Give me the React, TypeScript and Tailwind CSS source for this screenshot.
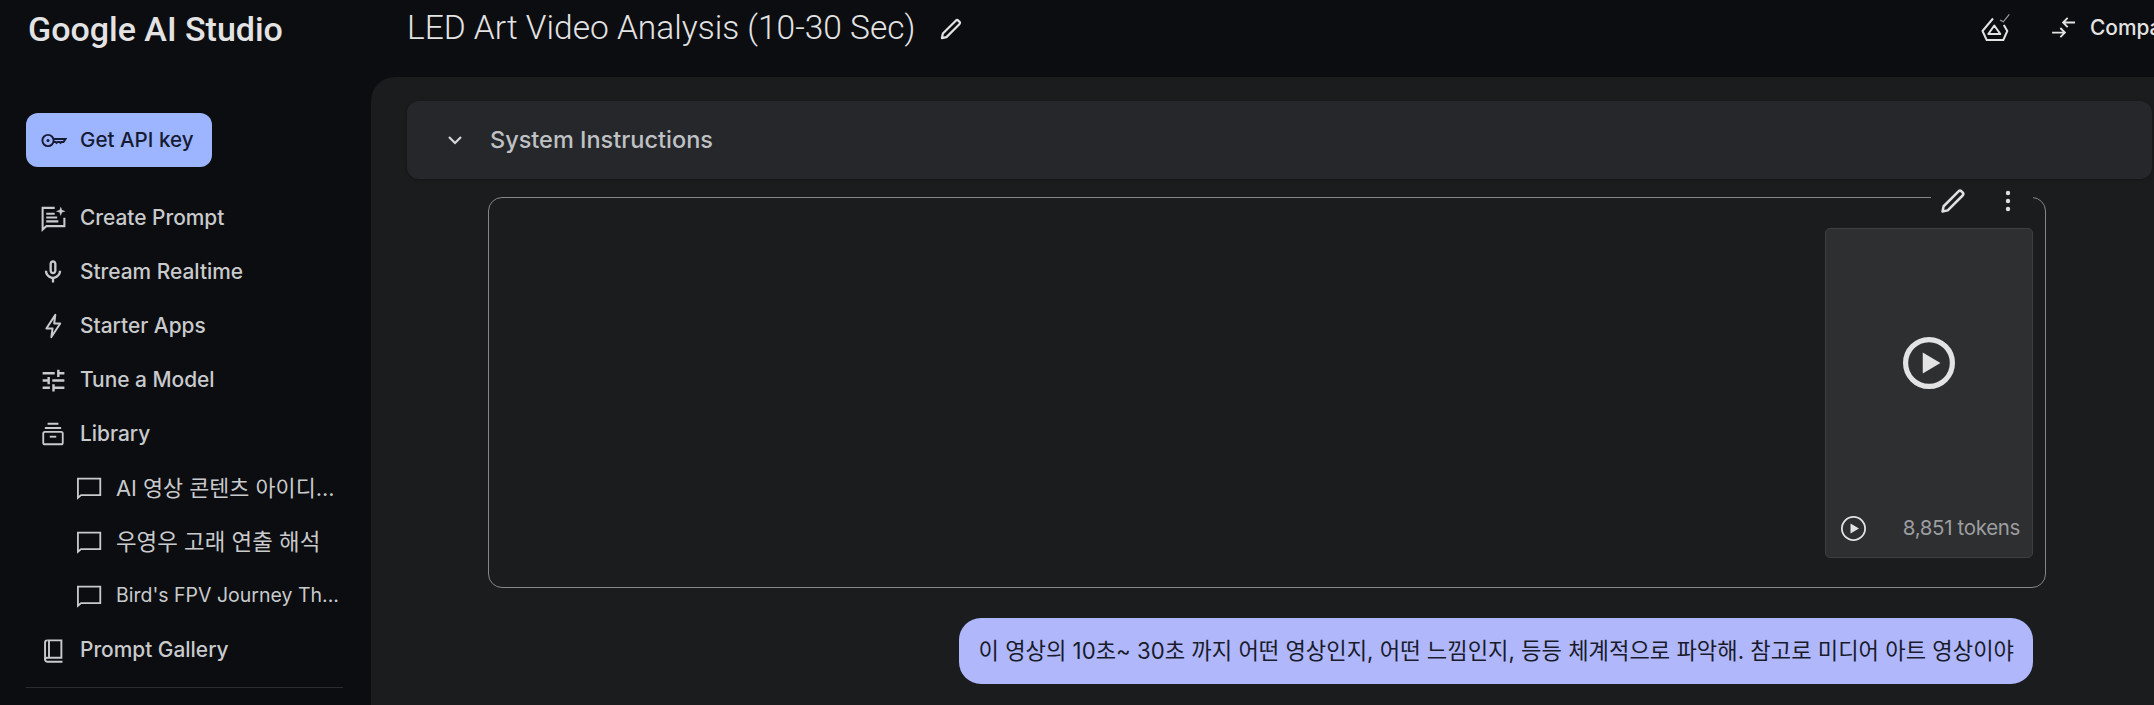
import type { ReactNode } from 'react'

const Icon = ({ size = 26, children, className = '' }: { size?: number; children: ReactNode; className?: string }) => (
  <svg width={size} height={size} viewBox="0 0 24 24" fill="none" className={`shrink-0 ${className}`}>
    {children}
  </svg>
)

const line = { stroke: 'currentColor', strokeWidth: 1.7, fill: 'none' }

const CreateIcon = () => (
  <Icon size={29}>
    <path {...line} d="M13 3.2H3v18l3.2-2.9H21v-7" />
    <path {...line} d="M6 8h7M6 11.2h9M6 14.4h10" />
    <path fill="currentColor" d="M18 2l1 3 3 1-3 1-1 3-1-3-3-1 3-1z" />
  </Icon>
)
const MicIcon = () => (
  <Icon size={28}>
    <path fill="currentColor" d="M12 14c1.66 0 3-1.34 3-3V5c0-1.66-1.34-3-3-3S9 3.34 9 5v6c0 1.66 1.34 3 3 3zm-1-9c0-.55.45-1 1-1s1 .45 1 1v6c0 .55-.45 1-1 1s-1-.45-1-1V5zm6 6c0 2.76-2.24 5-5 5s-5-2.24-5-5H5c0 3.53 2.61 6.43 6 6.92V21h2v-3.08c3.39-.49 6-3.39 6-6.92h-2z" />
  </Icon>
)
const BoltIcon = () => (
  <Icon size={28}>
    <path {...line} strokeLinejoin="round" d="M10.6 21.5l1-7.3H6.3L14 2.5l-1 7.3h5.2z" />
  </Icon>
)
const TuneIcon = () => (
  <Icon size={29}>
    <path fill="currentColor" d="M3 17v2h6v-2H3zM3 5v2h10V5H3zm10 16v-2h8v-2h-8v-2h-2v6h2zM7 9v2H3v2h4v2h2V9H7zm14 4v-2H11v2h10zm-6-4h2V7h4V5h-4V3h-2v6z" />
  </Icon>
)
const LibraryIcon = () => (
  <Icon size={26}>
    <path {...line} d="M7 2.5h10M4.5 6.5h15" />
    <rect {...line} x="3" y="10" width="18" height="11.5" rx="1.5" />
    <path {...line} d="M9 14.5h6" />
  </Icon>
)
const ChatIcon = () => (
  <Icon size={29}>
    <path fill="currentColor" d="M22.5 3H2.5v18.4l3.6-3.2h16.4V3zm-1.5 13.7H5.6L4 18.1V4.5h17v12.2z" />
  </Icon>
)
const BookIcon = () => (
  <Icon size={27}>
    <path {...line} d="M6.5 3H19v15.5H6.5A2 2 0 0 0 4.5 20.5 2 2 0 0 0 6.5 22H20" />
    <path {...line} d="M4.5 20.5V5a2 2 0 0 1 2-2M8 3v15.5" />
  </Icon>
)
const PencilIcon = ({ size = 26 }: { size?: number }) => (
  <Icon size={size}>
    <path stroke="currentColor" strokeWidth={2} strokeLinejoin="round" d="M3.6 20.4l.9-4.2L16.4 4.3a1.7 1.7 0 0 1 2.4 0l.9.9a1.7 1.7 0 0 1 0 2.4L7.8 19.5z" />
  </Icon>
)
const PlayIcon = ({ size, stroke }: { size: number; stroke: number }) => (
  <svg width={size} height={size} viewBox="0 0 50 50" fill="none" className="shrink-0">
    <circle cx="25" cy="25" r={25 - stroke / 2} stroke="currentColor" strokeWidth={stroke} />
    <path fill="currentColor" d="M19 15l17 10-17 10z" />
  </svg>
)

const navTop = [
  { label: 'Create Prompt', icon: <CreateIcon /> },
  { label: 'Stream Realtime', icon: <MicIcon /> },
  { label: 'Starter Apps', icon: <BoltIcon /> },
  { label: 'Tune a Model', icon: <TuneIcon /> },
  { label: 'Library', icon: <LibraryIcon /> },
]

const history = [
  { title: 'AI 영상 콘텐츠 아이디...', size: 'text-[21.8px]' },
  { title: '우영우 고래 연출 해석', size: 'text-[22.4px]' },
  { title: "Bird's FPV Journey Th...", size: 'text-[19.5px]' },
]

const sans = "font-['Inter','Noto_Sans_CJK_KR',sans-serif]"

export default function App() {
  return (
    <div className={`flex h-[705px] w-[2154px] overflow-hidden bg-[#0c0d11] ${sans}`}>
      <aside className="flex w-[371px] shrink-0 flex-col pl-[26px]">
        <div className="flex h-[59px] items-center pl-[2px] font-['Roboto',sans-serif] text-[34px] font-medium whitespace-nowrap text-[#e3e3e3]">
          Google AI Studio
        </div>
        <div className="mt-[54px] flex h-[54px] w-[186px] items-center gap-[13px] rounded-[12px] bg-[#9db4ff] pl-[14px] text-[20.6px] font-medium text-[#151b33]">
          <svg width="27" height="27" viewBox="0 0 27 27" fill="none" className="shrink-0">
            <circle cx="8" cy="13.5" r="5.6" stroke="currentColor" strokeWidth="1.9" />
            <circle cx="8" cy="13.5" r="1.5" fill="currentColor" />
            <path stroke="currentColor" strokeWidth="1.9" d="M13.5 12h12l-2 3h-2l-1 1-1-1h-2l-1 1-1-1h-2" />
          </svg>
          Get API key
        </div>
        <nav className="mt-[24px] w-[317px] text-[20.9px] font-medium text-[#c8cacc]">
          {navTop.map((item) => (
            <div key={item.label} className="flex h-[54px] items-center">
              <div className="flex w-[54px] justify-center">{item.icon}</div>
              {item.label}
            </div>
          ))}
          {history.map((item) => (
            <div key={item.title} className={`flex h-[54px] items-center pl-[48px] font-normal whitespace-nowrap ${item.size}`}>
              <ChatIcon />
              <span className="ml-[13px]">{item.title}</span>
            </div>
          ))}
          <div className="flex h-[54px] items-center">
            <div className="flex w-[54px] justify-center">
              <BookIcon />
            </div>
            Prompt Gallery
          </div>
        </nav>
        <div className="mt-[10px] h-px w-[317px] bg-[#2b2c30]" />
      </aside>

      <div className="flex min-w-0 flex-1 flex-col">
        <header className="flex h-[77px] shrink-0 items-start pl-[36px] text-[#e3e3e3]">
          <h1 className="mt-[8px] font-['Roboto',sans-serif] text-[33.5px] leading-[40px] font-light whitespace-nowrap">
            LED Art Video Analysis (10-30 Sec)
          </h1>
          <div className="mt-[16px] ml-[22px]">
            <PencilIcon />
          </div>
          <div className="mt-[11px] ml-auto flex w-[176px] items-center overflow-hidden whitespace-nowrap">
            <svg width="34" height="34" viewBox="0 0 34 34" fill="none" className="shrink-0">
              <path stroke="currentColor" strokeWidth="2" strokeLinejoin="round" d="M15 7.5L4.5 20l4.2 9h16.6l4-9-3.5-6" />
              <path stroke="currentColor" strokeWidth="2" strokeLinejoin="round" d="M16.3 14.5l6 8.5h-12z" />
              <path stroke="#9a9b9d" strokeWidth="1.2" d="M22 9l3.3 1.8 6-7.5" />
            </svg>
            <svg width="28" height="22" viewBox="0 0 30 24" fill="none" className="ml-[38px] shrink-0">
              <path stroke="currentColor" strokeWidth="2" d="M2 17h14m-5-5l5 5-5 5" />
              <path stroke="currentColor" strokeWidth="2" d="M27 6H14m5-5l-5 5 5 5" />
            </svg>
            <span className="ml-[12px] text-[20.9px] font-medium">Compare</span>
          </div>
        </header>

        <main className="flex-1 rounded-tl-[24px] bg-[#1b1c1e] pt-[24px] pr-[2px] pl-[36px]">
          <div className="flex h-[78px] items-center rounded-[12px] bg-[#26272b] shadow-[0_1px_4px_rgba(0,0,0,0.25)]">
            <svg width="16" height="10" viewBox="0 0 16 10" fill="none" className="ml-[40px]">
              <path stroke="#d5d6d8" strokeWidth="2.2" d="M2 2l6 6 6-6" />
            </svg>
            <span className="ml-[27px] text-[23.5px] font-medium text-[#bfc1c4]">System Instructions</span>
          </div>

          <div className="relative mt-[18px] mr-[106px] ml-[81px] flex h-[391px] justify-end rounded-[14px] border border-[#85868a] pt-[30px] pr-[12px]">
            <div className="absolute top-[-12px] right-[12px] flex h-[30px] w-[102px] items-center bg-[#1b1c1e] pl-[7px] text-[#dfe0e2]">
              <PencilIcon size={30} />
              <svg width="6" height="22" viewBox="0 0 6 22" className="ml-[37px]">
                <circle cx="3" cy="3" r="2.2" fill="currentColor" />
                <circle cx="3" cy="11" r="2.2" fill="currentColor" />
                <circle cx="3" cy="19" r="2.2" fill="currentColor" />
              </svg>
            </div>
            <div className="flex h-[330px] w-[208px] flex-col rounded-[5px] border border-[#3d3e41] bg-[#2e2f31]">
              <div className="flex h-[270px] items-center justify-center pb-[2px] text-[#e3e3e3]">
                <PlayIcon size={52} stroke={5} />
              </div>
              <div className="flex items-center justify-between pt-[14px] pr-[12px] pl-[15px]">
                <span className="text-[#e3e3e3]">
                  <PlayIcon size={25} stroke={3.6} />
                </span>
                <span className="text-[20.5px] tracking-[-0.35px] text-[#9c9d9f]">8,851 tokens</span>
              </div>
            </div>
          </div>

          <div className="mt-[30px] flex justify-end pr-[119px]">
            <div className="flex h-[66px] items-center rounded-[22px] bg-[#b0b8fb] px-[19px] text-[22.2px] whitespace-nowrap text-[#191b2b]">
              이 영상의 10초~ 30초 까지 어떤 영상인지, 어떤 느낌인지, 등등 체계적으로 파악해. 참고로 미디어 아트 영상이야
            </div>
          </div>
        </main>
      </div>
    </div>
  )
}
